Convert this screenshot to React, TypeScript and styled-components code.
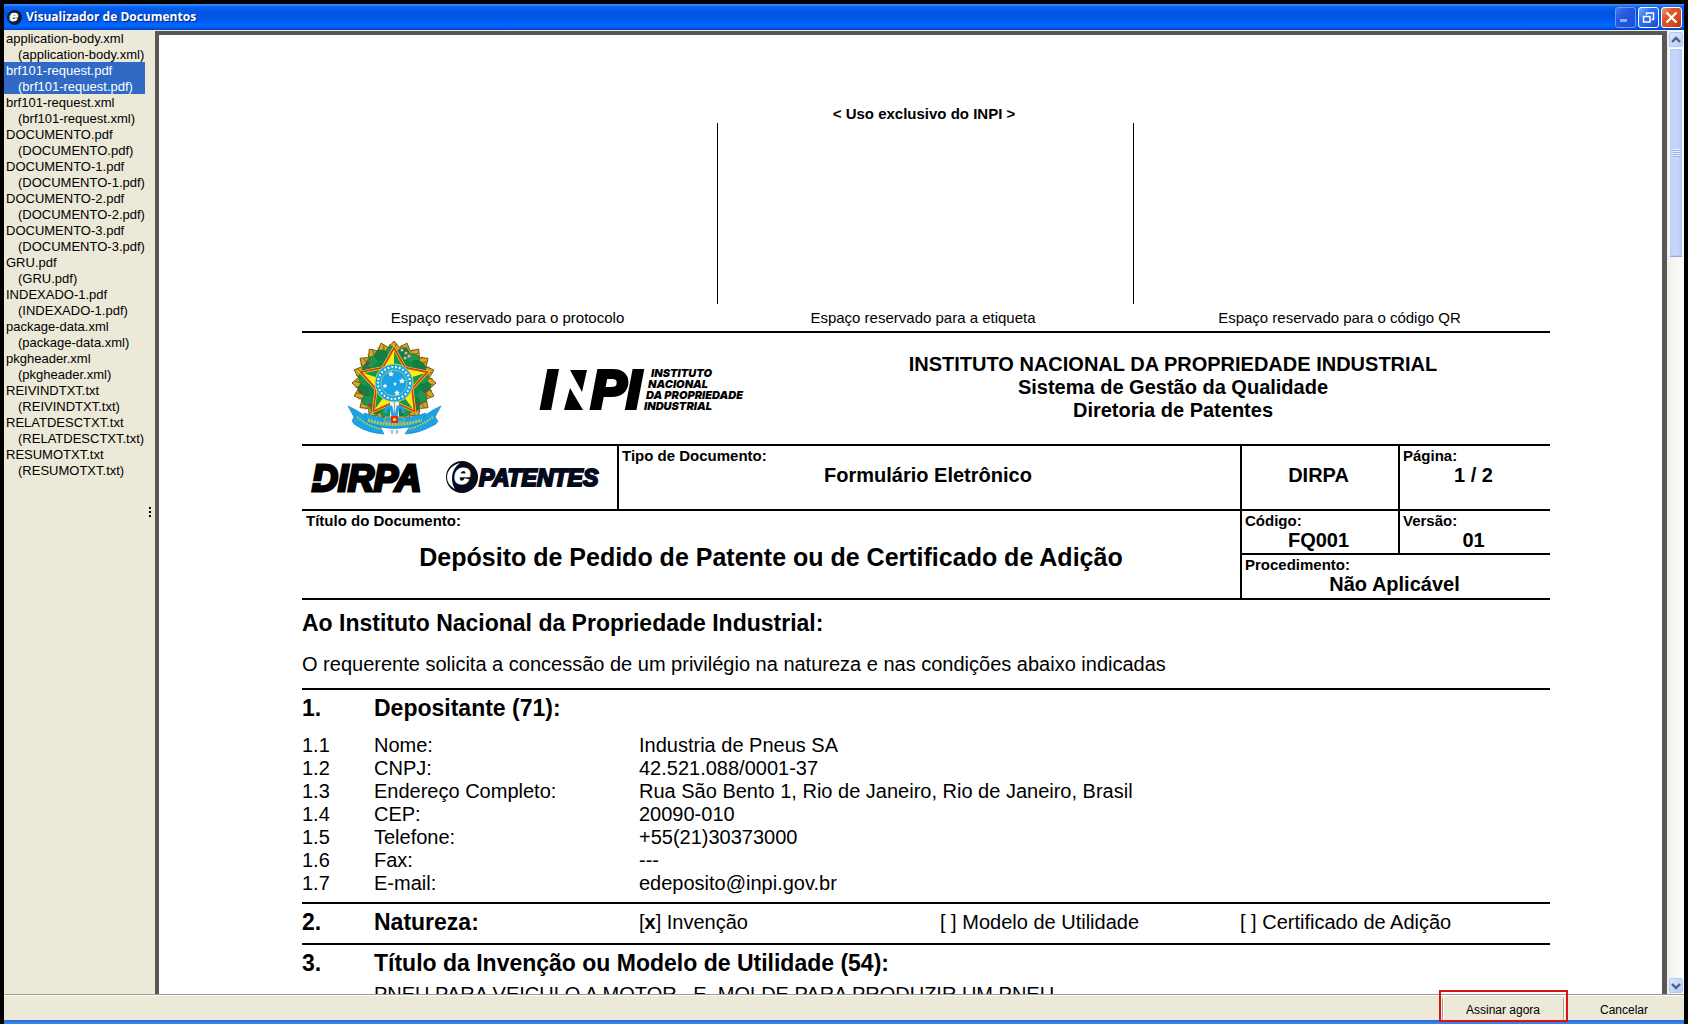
import React from "react";
import styled, { createGlobalStyle, css } from "styled-components";

const GlobalStyle = createGlobalStyle`
  *, *::before, *::after { box-sizing: border-box; }
  body { margin: 0; background: #000; overflow: hidden; }
  button { font: inherit; cursor: default; }
  h1, h2, h3, p { margin: 0; font-weight: inherit; font-size: inherit; }
  svg { overflow: visible; }
`;

const beige = "#ece9d8";
const frame = "#585858";

const BlueEdge = styled.div`
  height: 4px;
  flex: none;
  background: linear-gradient(#2a62c4, #2f7ae5 40%, #3a86ee);
`;

const Shell = styled.div`
  display: flex;
  flex-direction: column;
  height: 100vh;
  padding: 4px 4px 0;
  background: #000;
  font-family: "Liberation Sans", Arial, sans-serif;
  color: #000;
`;

const TitleBar = styled.header`
  display: flex;
  flex: none;
  align-items: center;
  gap: 4px;
  height: 26px;
  padding: 0 2px 0 3px;
  background: linear-gradient(#3d95ff 0, #0b62ec 3px, #0054e3 8px, #0058ea 14px, #0066ff 20px, #0062f8 23px, #0040c4 26px);
`;

const WindowTitle = styled.h1`
  flex: 1;
  && {
    font-family: "Trebuchet MS", "Open Sans", sans-serif;
    font-weight: 700;
    font-size: 12px;
  }
  line-height: 16px;
  color: #fff;
  text-shadow: 1px 1px 1px #00227a;
`;

const WindowButtons = styled.div`
  display: flex;
  gap: 2px;
`;

const WindowButton = styled.button<{ $tone?: "close" | "dim" }>`
  display: grid;
  place-items: center;
  width: 21px;
  height: 21px;
  padding: 0;
  border: 1px solid ${(p) => (p.$tone === "dim" ? "#6f98f0" : "#fff")};
  border-radius: 3px;
  background: ${(p) =>
    p.$tone === "close"
      ? "linear-gradient(135deg, #f0a088 0, #e2582e 30%, #d9481c 70%, #b8320c)"
      : p.$tone === "dim"
        ? "linear-gradient(135deg, #4a78e8, #2458dc 40%, #1c50d8)"
        : "linear-gradient(135deg, #86b0fa 0, #3471ee 35%, #225ee4 75%, #1848b8)"};
`;

const Main = styled.main`
  display: flex;
  flex: 1;
  min-height: 0;
  background: ${beige};
`;

const FileList = styled.ul`
  flex: none;
  width: 141px;
  margin: 0;
  padding: 0;
  list-style: none;
`;

const FileButton = styled.button<{ $selected?: boolean }>`
  display: block;
  width: 100%;
  padding: 0 0 0 2px;
  border: 0;
  background: ${(p) => (p.$selected ? "#316ac5" : "transparent")};
  color: ${(p) => (p.$selected ? "#fff" : "#000")};
  font-size: 13px;
  line-height: 18px;
  text-align: left;
  white-space: nowrap;
`;

const FileName = styled.span<{ $indent?: boolean }>`
  display: block;
  height: 16px;
  padding-left: ${(p) => (p.$indent ? 12 : 0)}px;
`;

const Splitter = styled.div`
  display: flex;
  flex: none;
  flex-direction: column;
  align-items: center;
  justify-content: center;
  gap: 2px;
  width: 10px;
`;

const Dot = styled.span`
  width: 2px;
  height: 2px;
  background: #000;
`;

const Viewer = styled.section`
  flex: 1;
  min-width: 0;
  margin-top: 1px;
  overflow: hidden;
  border: solid ${frame};
  border-width: 4px 5px 0 4px;
  background: #fff;
`;

const Page = styled.article`
  padding: 70px 112px 0 143px;
`;

const rule = "2px solid #000";

const Reserved = styled.div`
  display: grid;
  grid-template-columns: 415fr 416fr 417fr;
  text-align: center;
  font-size: 15px;
`;

const ReservedTitle = styled.h2`
  && { grid-column: 1 / -1; font-weight: 700; }
  padding-right: 4px;
  line-height: 18px;
`;

const ReservedSlot = styled.div`
  height: 181px;
  & + & { border-left: 1px solid #000; }
`;

const Caption = styled.p`
  padding-right: 4px;
  line-height: 27px;
`;

const Institution = styled.div`
  display: grid;
  grid-template-columns: 494fr 754fr;
  align-items: center;
  height: 113px;
  border-top: ${rule};
`;

const Emblems = styled.div`
  display: flex;
  align-items: center;
  gap: 97px;
  padding-left: 46px;
`;

const InstitutionName = styled.div`
  padding-bottom: 3px;
  text-align: center;
  font-weight: 700;
  font-size: 20px;
  line-height: 23px;
`;

const IdGrid = styled.div`
  display: grid;
  grid-template-columns: 315fr 623fr 158fr 152fr;
  grid-template-rows: 65px 44px 45px;
  border-bottom: ${rule};
`;

const Cell = styled.div<{ $area?: "title" | "procedure"; $first?: boolean }>`
  border-top: ${rule};
  border-left: ${(p) => (p.$first ? "0" : rule)};
  padding: 0 3px;
  ${(p) => p.$area === "title" && css`grid-area: 2 / 1 / 4 / 3; padding: 0 4px;`}
  ${(p) => p.$area === "procedure" && css`grid-area: 3 / 3 / 4 / 5;`}
`;

const LogoCell = styled(Cell)`
  display: flex;
  align-items: center;
  gap: 22px;
  padding-left: 8px;
`;

const Label = styled.p`
  height: 18px;
  && { font-weight: 700; font-size: 15px; }
  line-height: 19px;
`;

const Value = styled.p`
  padding-right: 3px;
  text-align: center;
  && { font-weight: 700; font-size: 20px; }
  line-height: 22px;
`;

const DocTitle = styled.h2`
  && { margin-top: 14px; font-weight: 700; font-size: 25px; }
  text-align: center;
  line-height: 28px;
`;

const Heading = styled.h2`
  && { font-weight: 700; font-size: 23px; }
  line-height: 28px;
`;

const Intro = styled.section`
  padding: 9px 0 12px;
  font-size: 20px;
  line-height: 24px;
  ${Heading} { margin-bottom: 15px; }
`;

const Section = styled.section`
  padding: 4px 0 7px;
  border-top: ${rule};
  font-size: 20px;
  line-height: 23px;
`;

const Columns = styled.div`
  display: grid;
  grid-template-columns: 72fr 265fr 301fr 300fr 310fr;
  align-items: center;
`;

const WideHeading = styled(Heading)`
  grid-column: 2 / -1;
`;

const Data = styled.table`
  width: 100%;
  margin-top: 12px;
  border-collapse: collapse;
  table-layout: fixed;
  th, td { padding: 0; height: 23px; font-weight: 400; text-align: left; }
`;

const Col = styled.col<{ $share: number }>`
  width: ${(p) => (p.$share * 100) / 1248}%;
`;

const Invention = styled.p`
  && { grid-column: 2 / -1; margin-top: 6px; }
  white-space: pre;
`;

const ScrollBar = styled.div`
  display: flex;
  flex: none;
  flex-direction: column;
  gap: 1px;
  width: 17px;
  padding: 2px 1px 1px 2px;
  background: linear-gradient(90deg, #f0efe8, #fdfdfa);
`;

const ScrollButton = styled.button`
  display: grid;
  flex: none;
  place-items: center;
  width: 14px;
  height: 15px;
  padding: 0;
  border: 1px solid #b4c8f6;
  border-radius: 2px;
  background: linear-gradient(135deg, #dce6fe, #b8ccfa);
`;

const Track = styled.div`
  flex: 1;
`;

const Thumb = styled.div`
  display: grid;
  place-content: center;
  gap: 1px;
  height: 209px;
  border: 1px solid #fff;
  border-bottom-color: #8fabe6;
  border-radius: 2px;
  background: linear-gradient(90deg, #c2d3fc, #c6d5fd 60%, #b2c8fa);
  box-shadow: 0 0 0 1px #b6caf6 inset;
`;

const Grip = styled.span`
  width: 7px;
  height: 1px;
  background: #eef4fe;
  box-shadow: 0 1px 0 #8cb0f8;
`;

const ActionBar = styled.footer`
  display: flex;
  flex: none;
  justify-content: flex-end;
  height: 26px;
  border-top: 1px solid #9d9b90;
  background: ${beige};
  box-shadow: 0 1px 0 #fff inset;
`;

const Action = styled.button<{ $marked?: boolean }>`
  position: relative;
  width: 120px;
  margin-top: 3px;
  padding: 1px 0 0;
  border: 0;
  background: transparent;
  font-size: 12px;
  line-height: 20px;
  ${(p) =>
    p.$marked &&
    css`
      width: 122px;
      border: solid #a5a294;
      border-width: 0 1px;
      box-shadow: 1px 0 0 #fff inset, 1px 0 0 #fff;
      &::after {
        content: "";
        position: absolute;
        inset: -8px -5px -2px -4px;
        border: 2px solid #d81414;
      }
    `}
`;

function EBadge({ size }: { size: number }) {
  return (
    <svg width={size} height={size} viewBox="0 0 32 32" aria-hidden="true">
      <circle cx="16" cy="16" r="16" fill="#0b1c3c" />
      <path d="M5 23 Q2 10 14 4 Q7 14 14 26 Z" fill="#5d7a9c" />
      <text x="6" y="24" fontFamily="Liberation Sans, Arial, sans-serif" fontWeight="700" fontStyle="italic" fontSize="32" fill="#fff" stroke="#fff" strokeWidth="1.5">e</text>
    </svg>
  );
}

const star = (cx: number, cy: number, outer: number, inner: number, n = 5) =>
  Array.from({ length: n * 2 }, (_, i) => {
    const r = i % 2 ? inner : outer;
    const a = (Math.PI * i) / n - Math.PI / 2;
    return `${(cx + r * Math.cos(a)).toFixed(2)},${(cy + r * Math.sin(a)).toFixed(2)}`;
  }).join(" ");

function CoatOfArms() {
  const cx = 46;
  const cy = 42;
  const at = (r: number, k: number) => {
    const a = (Math.PI * k) / 5 - Math.PI / 2;
    return `${cx + r * Math.cos(a)},${cy + r * Math.sin(a)}`;
  };
  const outline = star(cx, cy, 35, 19);
  return (
    <svg width="94" height="96" viewBox="0 0 94 96" role="img" aria-label="Brasão da República">
      <polygon points={star(cx, cy, 42, 36, 20)} fill="#d8a520" stroke="#70551a" strokeWidth="1" />
      {Array.from({ length: 40 }, (_, i) => {
        const a = (Math.PI * i) / 20;
        return <line key={i} x1={cx + 33 * Math.cos(a)} y1={cy + 33 * Math.sin(a)} x2={cx + 39 * Math.cos(a + 0.05)} y2={cy + 39 * Math.sin(a + 0.05)} stroke="#7c5f18" strokeWidth="1" />;
      })}
      {Array.from({ length: 18 }, (_, i) => {
        const a = (Math.PI * i) / 9 + 0.12;
        const x = cx + 29 * Math.cos(a);
        const y = cy + 29 * Math.sin(a);
        return <ellipse key={i} cx={x} cy={y} rx="8" ry="6" transform={`rotate(${i * 47} ${x} ${y})`} fill={i % 2 ? "#1f9650" : "#128044"} stroke="#0d6a3a" strokeWidth="0.6" />;
      })}
      <circle cx={cx} cy={cy} r="27" fill="#17864a" />
      {[[13, 51], [20, 22], [78, 50], [71, 63], [22, 64]].map(([x, y]) => (
        <circle key={`${x}-${y}`} cx={x} cy={y} r="1.8" fill="#a8332c" />
      ))}
      {[[54, 9], [58, 12], [61, 15], [57, 17]].map(([x, y]) => (
        <circle key={`${x}-${y}`} cx={x} cy={y} r="1.5" fill="#e8b0a0" />
      ))}
      <polygon points={outline} fill="#fdee10" />
      {[0, 2, 4, 6, 8].map((k) => (
        <polygon key={k} points={`${cx},${cy} ${at(35, k)} ${at(19, k + 1)}`} fill="#129a48" />
      ))}
      <polygon points={outline} fill="none" stroke="#fdee10" strokeWidth="3" />
      <polygon points={outline} fill="none" stroke="#d83a1c" strokeWidth="1.8" />
      <path d="M42 61 h9 v31 h-9z" fill="#eef4f8" />
      <path d="M46.500 61 v20" stroke="#8c98a4" strokeWidth="1" />
      <path d="M38 72 Q37 65 43 66 L45 75 M55 72 Q56 65 50 66 L48 75" fill="none" stroke="#1ba3e8" strokeWidth="3" />
      <circle cx={cx} cy={cy} r="19" fill="#1ba3e8" stroke="#c9dd4a" strokeWidth="1" />
      <circle cx={cx} cy={cy} r="16" fill="none" stroke="#fff" strokeWidth="2" strokeDasharray="1.8 2" />
      <circle cx={cx} cy={cy} r="13" fill="none" stroke="#b8d860" strokeWidth="0.8" />
      {[[43, 33, 3], [54, 40, 3.2], [47, 43, 2], [37, 45, 2.5], [49, 52, 3]].map(([x, y, r]) => (
        <polygon key={`${x}-${y}`} points={star(x, y, r, r * 0.5)} fill="#fff" />
      ))}
      <path d="M0 65 L8 69 Q20 77 30 82 L36 93 Q20 92 9 85 Q6 84 4 80 L6 76 Z" fill="#1ba3e8" stroke="#1479b4" strokeWidth="0.6" />
      <path d="M93 65 L85 69 Q74 77 64 82 L57 93 Q72 92 84 85 Q88 84 90 80 L87 76 Z" fill="#1ba3e8" stroke="#1479b4" strokeWidth="0.6" />
      <path d="M16 72 Q46 83 78 72 L74 82 Q46 93 19 82 Z" fill="#1ba3e8" stroke="#1479b4" strokeWidth="0.6" />
      <path d="M20 79 Q46 88 74 79" fill="none" stroke="#b9cf3c" strokeWidth="3" strokeDasharray="2 1" />
      <path d="M9 76 Q20 85 32 88 M85 76 Q73 85 61 88" fill="none" stroke="#b9cf3c" strokeWidth="2" strokeDasharray="1.6 1.2" />
      <path d="M37 76 h19 v5 h-19z" fill="#1ba3e8" stroke="#e8b020" strokeWidth="0.8" />
      <path d="M43 75 h7 v7 h-7z" fill="#e02c20" />
      <circle cx="46.500" cy="78.500" r="1.600" fill="#f9e818" />
      <path d="M44 89 v4 M49 89 v4" stroke="#888" strokeWidth="1" />
    </svg>
  );
}

const heavy = {
  fontFamily: "Liberation Sans, Arial, sans-serif",
  fontWeight: 700,
  fontStyle: "italic",
} as const;

const black = {
  fontFamily: "Inter, Liberation Sans, sans-serif",
  fontWeight: 900,
  fontStyle: "italic",
} as const;

function InpiLogo() {
  return (
    <svg width="214" height="44" viewBox="0 0 214 44" role="img" aria-label="INPI">
      <g {...heavy} fontSize="53" stroke="#000" strokeWidth="4">
        <text x="2" y="41">I</text>
        <text x="52" y="41">PI</text>
      </g>
      <path d="M25 43 L31 21 L44 43 Z M31 3 H48 L43 25 Z" />
      <g {...black} fontSize="11">
        <text x="112" y="10">INSTITUTO</text>
        <text x="109" y="21">NACIONAL</text>
        <text x="107" y="32">DA PROPRIEDADE</text>
        <text x="105" y="43">INDUSTRIAL</text>
      </g>
    </svg>
  );
}

function DirpaLogo() {
  return (
    <svg width="112" height="34" viewBox="0 0 112 34" role="img" aria-label="DIRPA">
      <text {...heavy} x="2" y="30" fontSize="36" stroke="#000" strokeWidth="3">DIRPA</text>
      <path d="M0 21 H15" stroke="#fff" strokeWidth="1.5" />
    </svg>
  );
}

function EPatentesLogo() {
  return (
    <svg width="156" height="34" viewBox="0 0 156 34" role="img" aria-label="e-Patentes">
      <circle cx="18" cy="16" r="16" fill="#050a1c" />
      <path d="M16 2 C2 5 -2 21 11 28 C6 20 7 8 16 2 Z" fill="#fff" />
      <text {...heavy} x="10" y="23" fontSize="30" fill="#fff" stroke="#fff" strokeWidth="1">e</text>
      <text {...heavy} x="35" y="25" fontSize="23" fill="#050a1c" stroke="#050a1c" strokeWidth="2">PATENTES</text>
    </svg>
  );
}

const files = [
  "application-body.xml",
  "brf101-request.pdf",
  "brf101-request.xml",
  "DOCUMENTO.pdf",
  "DOCUMENTO-1.pdf",
  "DOCUMENTO-2.pdf",
  "DOCUMENTO-3.pdf",
  "GRU.pdf",
  "INDEXADO-1.pdf",
  "package-data.xml",
  "pkgheader.xml",
  "REIVINDTXT.txt",
  "RELATDESCTXT.txt",
  "RESUMOTXT.txt",
];

const applicant = [
  ["1.1", "Nome:", "Industria de Pneus SA"],
  ["1.2", "CNPJ:", "42.521.088/0001-37"],
  ["1.3", "Endereço Completo:", "Rua São Bento 1, Rio de Janeiro, Rio de Janeiro, Brasil"],
  ["1.4", "CEP:", "20090-010"],
  ["1.5", "Telefone:", "+55(21)30373000"],
  ["1.6", "Fax:", "---"],
  ["1.7", "E-mail:", "edeposito@inpi.gov.br"],
];

function Chevron({ down }: { down?: boolean }) {
  return (
    <svg width="10" height="8" viewBox="0 0 10 8" aria-hidden="true">
      <path d={down ? "M1 2 L5 6 L9 2" : "M1 6 L5 2 L9 6"} fill="none" stroke="#4d6185" strokeWidth="2.4" />
    </svg>
  );
}

export default function App() {
  const [selected, setSelected] = React.useState("brf101-request.pdf");
  return (
    <Shell>
      <GlobalStyle />
      <TitleBar>
        <EBadge size={15} />
        <WindowTitle>Visualizador de Documentos</WindowTitle>
        <WindowButtons>
          <WindowButton $tone="dim" aria-label="Minimizar">
            <svg width="13" height="13" viewBox="0 0 13 13"><path d="M1 8 h7 v3 h-7z" fill="#8fa8f4" /></svg>
          </WindowButton>
          <WindowButton aria-label="Restaurar">
            <svg width="13" height="13" viewBox="0 0 13 13" fill="none" stroke="#fff">
              <path d="M4.500 4 V2 H11.500 V8.500 H9.500" strokeWidth="1.500" />
              <path d="M1.500 5.500 h6.500 v5.500 h-6.500z" strokeWidth="1.500" />
            </svg>
          </WindowButton>
          <WindowButton $tone="close" aria-label="Fechar">
            <svg width="13" height="13" viewBox="0 0 13 13"><path d="M1.500 1.500 L11.500 11.500 M11.500 1.500 L1.500 11.500" stroke="#fff" strokeWidth="2.300" /></svg>
          </WindowButton>
        </WindowButtons>
      </TitleBar>

      <Main>
        <FileList>
          {files.map((name) => (
            <li key={name}>
              <FileButton $selected={name === selected} onClick={() => setSelected(name)}>
                <FileName>{name}</FileName>
                <FileName $indent>({name})</FileName>
              </FileButton>
            </li>
          ))}
        </FileList>
        <Splitter><Dot /><Dot /><Dot /></Splitter>

        <Viewer>
          <Page>
            <Reserved>
              <ReservedTitle>&lt; Uso exclusivo do INPI &gt;</ReservedTitle>
              <ReservedSlot />
              <ReservedSlot />
              <ReservedSlot />
              <Caption>Espaço reservado para o protocolo</Caption>
              <Caption>Espaço reservado para a etiqueta</Caption>
              <Caption>Espaço reservado para o código QR</Caption>
            </Reserved>

            <Institution>
              <Emblems>
                <CoatOfArms />
                <InpiLogo />
              </Emblems>
              <InstitutionName>
                <p>INSTITUTO NACIONAL DA PROPRIEDADE INDUSTRIAL</p>
                <p>Sistema de Gestão da Qualidade</p>
                <p>Diretoria de Patentes</p>
              </InstitutionName>
            </Institution>

            <IdGrid>
              <LogoCell $first>
                <DirpaLogo />
                <EPatentesLogo />
              </LogoCell>
              <Cell>
                <Label>Tipo de Documento:</Label>
                <Value>Formulário Eletrônico</Value>
              </Cell>
              <Cell>
                <Label />
                <Value>DIRPA</Value>
              </Cell>
              <Cell>
                <Label>Página:</Label>
                <Value>1 / 2</Value>
              </Cell>
              <Cell $first $area="title">
                <Label>Título do Documento:</Label>
                <DocTitle>Depósito de Pedido de Patente ou de Certificado de Adição</DocTitle>
              </Cell>
              <Cell>
                <Label>Código:</Label>
                <Value>FQ001</Value>
              </Cell>
              <Cell>
                <Label>Versão:</Label>
                <Value>01</Value>
              </Cell>
              <Cell $area="procedure">
                <Label>Procedimento:</Label>
                <Value>Não Aplicável</Value>
              </Cell>
            </IdGrid>

            <Intro>
              <Heading>Ao Instituto Nacional da Propriedade Industrial:</Heading>
              <p>O requerente solicita a concessão de um privilégio na natureza e nas condições abaixo indicadas</p>
            </Intro>

            <Section>
              <Columns>
                <Heading as="span">1.</Heading>
                <WideHeading>Depositante (71):</WideHeading>
              </Columns>
              <Data>
                <colgroup>
                  <Col $share={72} />
                  <Col $share={265} />
                  <Col $share={911} />
                </colgroup>
                <tbody>
                  {applicant.map(([n, label, value]) => (
                    <tr key={n}>
                      <td>{n}</td>
                      <th scope="row">{label}</th>
                      <td>{value}</td>
                    </tr>
                  ))}
                </tbody>
              </Data>
            </Section>

            <Section>
              <Columns>
                <Heading as="span">2.</Heading>
                <Heading>Natureza:</Heading>
                <span>[<b>x</b>] Invenção</span>
                <span>[ ] Modelo de Utilidade</span>
                <span>[ ] Certificado de Adição</span>
              </Columns>
            </Section>

            <Section>
              <Columns>
                <Heading as="span">3.</Heading>
                <WideHeading>Título da Invenção ou Modelo de Utilidade (54):</WideHeading>
                <Invention>PNEU PARA VEICULO A MOTOR,  E  MOLDE PARA PRODUZIR UM PNEU</Invention>
              </Columns>
            </Section>
          </Page>
        </Viewer>

        <ScrollBar>
          <ScrollButton aria-label="Rolar para cima"><Chevron /></ScrollButton>
          <Track>
            <Thumb><Grip /><Grip /><Grip /><Grip /></Thumb>
          </Track>
          <ScrollButton aria-label="Rolar para baixo"><Chevron down /></ScrollButton>
        </ScrollBar>
      </Main>

      <ActionBar>
        <Action $marked>Assinar agora</Action>
        <Action>Cancelar</Action>
      </ActionBar>
      <BlueEdge />
    </Shell>
  );
}
